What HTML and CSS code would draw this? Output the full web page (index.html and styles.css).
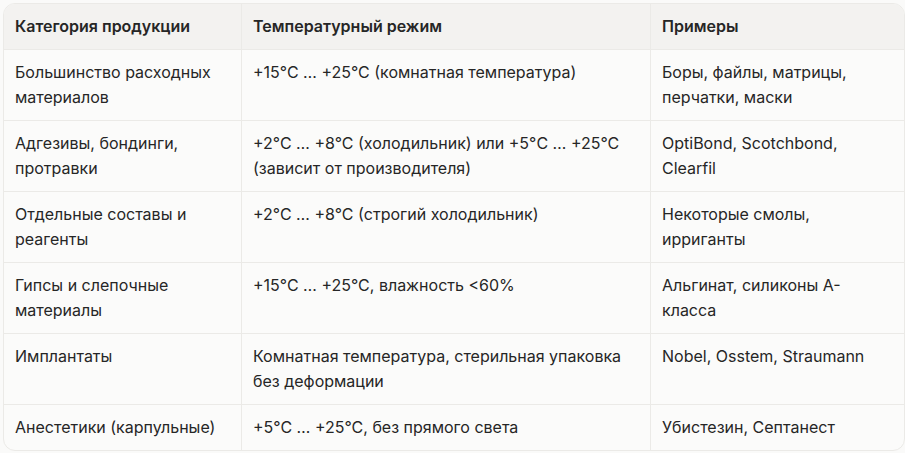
FILE: index.html
```html
<!DOCTYPE html>
<html lang="ru">
<head>
<meta charset="utf-8">
<link rel="stylesheet" href="styles.css">
</head>
<body>
<div class="wrap">
<table class="tbl">
<colgroup><col class="c1"><col class="c2"><col class="c3"></colgroup>
<thead>
<tr><th>Категория продукции</th><th>Температурный режим</th><th>Примеры</th></tr>
</thead>
<tbody>
<tr><td>Большинство расходных материалов</td><td>+15°C … +25°C (комнатная температура)</td><td>Боры, файлы, матрицы, перчатки, маски</td></tr>
<tr><td>Адгезивы, бондинги, протравки</td><td>+2°C … +8°C (холодильник) или +5°C … +25°C (зависит от производителя)</td><td>OptiBond, Scotchbond, Clearfil</td></tr>
<tr><td>Отдельные составы и реагенты</td><td>+2°C … +8°C (строгий холодильник)</td><td>Некоторые смолы, ирриганты</td></tr>
<tr><td>Гипсы и слепочные материалы</td><td>+15°C … +25°C, влажность &lt;60%</td><td>Альгинат, силиконы А-класса</td></tr>
<tr><td>Имплантаты</td><td>Комнатная температура, стерильная упаковка без деформации</td><td>Nobel, Osstem, Straumann</td></tr>
<tr><td>Анестетики (карпульные)</td><td>+5°C … +25°C, без прямого света</td><td>Убистезин, Септанест</td></tr>
</tbody>
</table>
</div>
</body>
</html>
```

FILE: styles.css
```css
html, body {
  margin: 0;
  background: #fafaf9;
}
.wrap {
  padding: 3px 2px 2px 3px;
}
.tbl {
  width: 900px;
  table-layout: fixed;
  border-collapse: separate;
  border-spacing: 0;
  border: 1px solid #ebeae7;
  border-radius: 12px;
  overflow: hidden;
  font-family: Inter, "Noto Sans", sans-serif;
  font-size: 16px;
  line-height: 25px;
  color: #262626;
  background: #fbfbfa;
}
.c1 { width: 238px; }
.c2 { width: 409px; }
.c3 { width: 253px; }
.tbl th, .tbl td {
  text-align: left;
  vertical-align: top;
  padding: 10px 12px 10px 11px;
  border-right: 1px solid #ebeae7;
  border-bottom: 1px solid #ebeae7;
}
.tbl th:last-child, .tbl td:last-child { border-right: none; }
.tbl tbody tr:last-child td { border-bottom: none; }
.tbl th {
  background: #f3f2f0;
  font-weight: 600;
}
```
